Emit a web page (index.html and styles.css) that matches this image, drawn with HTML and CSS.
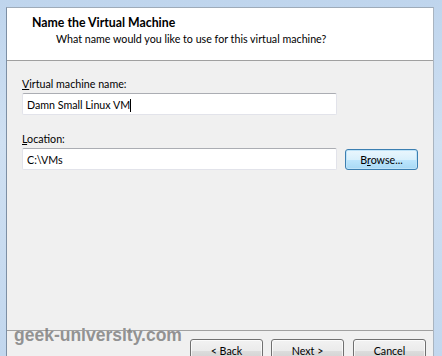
FILE: index.html
```html
<!DOCTYPE html>
<html lang="en">
<head>
  <meta charset="UTF-8">
  <title>New Virtual Machine Wizard</title>
  <link rel="stylesheet" href="styles.css">
</head>
<body>
  <div class="frame">
    <div class="client">
      <header class="wizard-head">
        <h1>Name the Virtual Machine</h1>
        <p>What name would you like to use for this virtual machine?</p>
      </header>

      <div class="wizard-body">
        <label class="field-label"><u>V</u>irtual machine name:</label>
        <div class="field-row">
          <div class="textbox">Damn Small Linux VM<span class="caret"></span></div>
        </div>

        <label class="field-label loc"><u>L</u>ocation:</label>
        <div class="field-row">
          <div class="textbox">C:\VMs</div>
          <button class="btn btn-default">B<u>r</u>owse...</button>
        </div>
      </div>

      <footer class="wizard-foot">
        <button class="btn">&lt; Back</button>
        <button class="btn">Next &gt;</button>
        <button class="btn btn-cancel">Cancel</button>
      </footer>

      <div class="watermark">geek-university.com</div>
    </div>
  </div>
</body>
</html>
```

FILE: styles.css
```css
html, body {
  margin: 0;
  padding: 0;
  height: 356px;
  overflow: hidden;
}
body {
  font-family: Lato, "Noto Sans", sans-serif;
  font-size: 10.7px;
  color: #000;
  background: linear-gradient(to bottom, #bfd5ed 0, #cfe0f2 40%, #c2d7ee 100%);
}
.frame {
  padding: 7px 8px 0 6px;
  height: 349px;
}
.client {
  position: relative;
  height: 100%;
  border-left: 1px solid #7d8fa4;
  border-top: 1px solid #9eabb9;
  border-right: 1px solid #a9b4c0;
  background-color: #f0f0f0;
  display: flex;
  flex-direction: column;
}
.wizard-head {
  background-color: #fff;
  border-bottom: 1px solid #a0a0a0;
  padding: 7px 0 0 25px;
  box-sizing: border-box;
  height: 53px;
}
.wizard-head h1 {
  margin: 0;
  font-size: 12.3px;
  font-weight: bold;
  line-height: 16px;
}
.wizard-head p {
  margin: 0 0 0 24px;
  line-height: 15px;
}
.wizard-body {
  flex: 1;
  padding: 15px 0 0 15px;
}
.field-label {
  display: block;
  line-height: 15px;
  margin-bottom: 2px;
}
.field-label.loc {
  margin-top: 16px;
}
.field-row {
  display: flex;
  align-items: center;
  gap: 8px;
}
.textbox {
  width: 315px;
  height: 22px;
  box-sizing: border-box;
  background: #fff;
  border: 1px solid #e2e3ea;
  border-top-color: #abadb3;
  border-radius: 2px;
  padding: 3px 0 0 4px;
  line-height: 15px;
}
.caret {
  display: inline-block;
  width: 1px;
  height: 13px;
  background: #000;
  vertical-align: -3px;
}
.btn {
  font-family: inherit;
  font-size: 10.7px;
  width: 73px;
  height: 23px;
  padding: 0;
  color: #000;
  border: 1px solid #707070;
  border-radius: 3px;
  background: linear-gradient(to bottom, #f2f2f2 0, #ebebeb 50%, #dddddd 51%, #cfcfcf 100%);
  box-shadow: inset 0 0 0 1px rgba(255, 255, 255, 0.7);
}
.btn-default {
  height: 21px;
  border-color: #3c7fb1;
  background: linear-gradient(to bottom, #eaf6fd 0, #d9f0fc 50%, #bee6fd 51%, #a7d9f5 100%);
  box-shadow: inset 0 0 0 1px #bfe3f8;
}
.wizard-foot {
  border-top: 1px solid #a0a0a0;
  height: 18px;
  padding: 8px 7px 0 0;
  display: flex;
  justify-content: flex-end;
  gap: 8px;
}
.btn-cancel {
  margin-left: 1px;
}
.watermark {
  position: absolute;
  left: 7px;
  top: 317px;
  font-family: "Liberation Sans", sans-serif;
  font-weight: bold;
  font-size: 17.5px;
  color: rgba(120, 120, 120, 0.8);
}
```
